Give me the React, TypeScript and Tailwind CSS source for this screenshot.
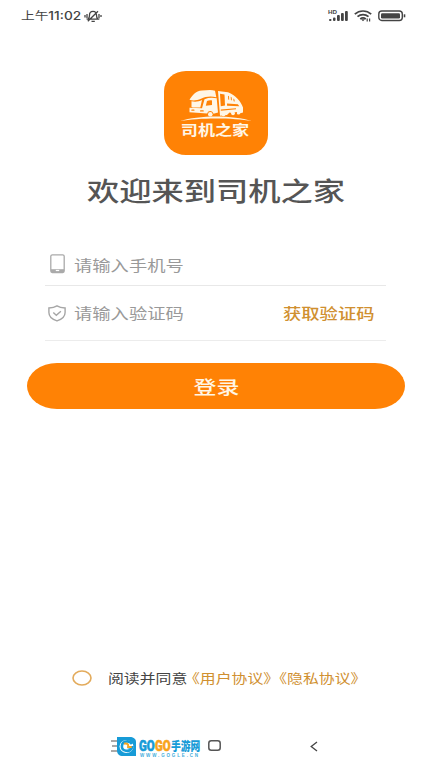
import type { ReactNode } from "react";
import { twMerge } from "tailwind-merge";

// Wide lettering: the glyphs are drawn broader than they are tall
function Wide({ className, children }: { className?: string; children: ReactNode }) {
  return (
    <span className={twMerge("inline-block origin-left scale-x-[1.24] whitespace-nowrap", className)}>
      {children}
    </span>
  );
}

function StatusBar() {
  return (
    <header className="flex h-8 items-center justify-between pl-[21px] pr-[26px] text-[#444]">
      <div className="flex items-center">
        <div className="w-[63px] text-[11.5px] leading-none">
          <Wide className="scale-x-[1.19]">
            上午<span className="font-['Inter'] text-[11.5px] font-medium">11:02</span>
          </Wide>
        </div>
        <svg className="h-[14px] w-[18px]" viewBox="0 0 18 14" fill="none" stroke="currentColor" strokeWidth="1.3">
          <path d="M4 10.200c1.300-1 1.500-2 1.500-4C5.500 3.700 6.800 2.300 9 2.300s3.500 1.400 3.500 3.900c0 2 .3 3 1.500 4ZM7.500 12.300h3.300M3.800 12.300 14 2.300M1 6v2.500M3 5v4.500M15 5v4.500M17 6v2" />
        </svg>
      </div>

      <div className="flex items-center">
        <svg className="h-[14px] w-[22px]" viewBox="0 0 22 14" fill="currentColor">
          <text x="1" y="5" fontSize="6" fontWeight="700" fontFamily="Liberation Sans, sans-serif" textLength="9" lengthAdjust="spacingAndGlyphs">HD</text>
          <rect x="2" y="10" width="2.500" height="2" rx="1" />
          <rect x="6" y="8.500" width="2.500" height="3.500" rx="1" />
          <rect x="10" y="6" width="2.800" height="6" rx="1" />
          <rect x="14" y="4" width="2.800" height="8" rx="1" />
          <rect x="18" y="2" width="2.800" height="10" rx="1" />
        </svg>
        <svg className="ml-[5px] h-[14px] w-[18px]" viewBox="0 0 18 14" fill="none" stroke="currentColor" strokeWidth="1.700">
          <path d="M.8 5.200C5.500.9 12.500.9 17.200 5.200M3.500 7.700c3.200-2.800 7.800-2.800 11 0M6.200 10c1.700-1.300 3.900-1.300 5.600 0" />
          <path d="m7 10.300 2 1.900 2-1.900Z" fill="currentColor" stroke="none" />
          <path d="M13.200 9.500v3M15.600 9.500v3" strokeWidth="1.200" />
        </svg>
        <svg className="ml-[6px] h-[12px] w-[28px]" viewBox="0 0 28 12" fill="none" stroke="currentColor">
          <rect x=".8" y="1" width="23.500" height="9.500" rx="3" strokeWidth="1.400" />
          <rect x="3" y="3.200" width="19" height="5.200" rx="1.200" fill="currentColor" stroke="none" />
          <path d="M26.500 4.300v3" strokeWidth="1.600" />
        </svg>
      </div>
    </header>
  );
}

function AppLogo() {
  return (
    <div className="mt-[39px] flex h-[84px] w-[104px] flex-col items-center self-center rounded-[22px/20px] bg-[#ff8205] pt-[17px] text-[#fff6e6]">
      <svg className="h-[34px] w-[72px] shrink-0" viewBox="0 0 72 34" fill="currentColor">
        {/* wind deflector and cab roof */}
        <path d="M9.500 11.800C12 8 15.500 3 22 2.600c5-.4 9.500-1.200 13 .2l1.300 6.400c-5.800-1.400-10.800-.7-15.300 1.600-4 1.700-8 2.200-11.500 1Z" />
        {/* cab */}
        <path d="M11.500 13.300c4 .9 7.500.2 10.500-1.200l-1.700 7.300H13c-1.500 0-1.700-.5-1.500-1.700Z" />
        <path d="M24.500 11.200c4-1.700 8-1.900 12.200-.9l1.300 14.200-4.500 1.300c-.5-3.500-5.500-4-6.300-.3L9.500 24.200v-4.500l12.500.5Z" />
        <g fill="#ff8205">
          <path d="m27 13-1.200 4.800 6.200-.8v-4.500c-1.700-.3-3.500-.1-5 .5Z" />
          <rect x="11.300" y="21.500" width="3.200" height="1.300" rx=".6" />
          <rect x="20" y="22.300" width="3.800" height="1.300" rx=".6" />
        </g>
        <circle cx="30.300" cy="26.200" r="2.300" />
        {/* trailer */}
        <path d="m38 3 10 1.200C55.500 7 61 13.500 63 19.500v5l-3.500 1-3-1.500-5 1-2-.5-2.500 2.500-7 .8Z" />
        <g fill="#ff8205">
          <path d="M40 5.800 44.500 6.500 45 17.500l-4.200.7Z" />
          <path d="m47 15.500 10.800.8 1.500 2-12.200-.6Z" />
          <path d="m48 7.800 1 .4.200 3.600-1-.2Zm2.700 1 1 .6.200 3-1-.3Zm2.600 1.700 1 .8.500 2.200-1.200-.3Z" />
          <path d="M40.800 21.500 56 20.300v1l-15.200 1.500Z" />
        </g>
        <circle cx="43.500" cy="26.300" r="2" />
        <circle cx="53" cy="25.300" r="1.900" />
        <circle cx="58.500" cy="24.900" r="1.700" />
        {/* road */}
        <path d="M.5 33C18 27 54 27 71.500 33 54 29.500 18 29.500.5 33Z" />
      </svg>
      <Wide className="mr-[3px] block origin-center scale-x-[1.22] text-[14px] font-bold leading-[14px]">
        司机之家
      </Wide>
    </div>
  );
}

function PhoneIcon() {
  return (
    <svg className="ml-[5px] mr-[9px] h-[20px] w-[15px]" viewBox="0 0 15 20" fill="none" stroke="#aaa">
      <rect x=".8" y=".8" width="13.400" height="17.800" rx="1.500" strokeWidth="1.300" />
      <path d="M1 16.700h13" strokeWidth="3" />
      <path d="M5.800 16.500h3.400" stroke="#fff" strokeWidth="1.200" />
    </svg>
  );
}

function ShieldIcon() {
  return (
    <svg className="ml-[3px] mr-[8px] h-[17px] w-[18px]" viewBox="0 0 18 17" fill="none" stroke="#a6a6a6" strokeWidth="1.400">
      <path d="M9 .9C6.800 2.300 4 2.900.9 3v4.500c0 4.200 3 6.800 8.100 8.400 5.100-1.600 8.100-4.200 8.100-8.400V3C14 2.900 11.200 2.300 9 .9Z" />
      <path d="m5.300 7.600 3 2.700 4.600-4.100" />
    </svg>
  );
}

function Watermark() {
  return (
    <div className="flex items-start">
      <svg className="mt-[1px] h-[19px] w-[26px]" viewBox="0 0 26 19">
        <path d="M0 4h8M1 9h6M0 14h8" stroke="#555" strokeWidth="1.200" />
        <path d="M6 0h13c3 0 6 1.800 6 5v14H12c-4 0-6-2-6-6Z" fill="#179bd7" />
        <ellipse cx="15.500" cy="9.500" rx="7" ry="6.500" fill="#fff" />
        <path d="M21 7c-2.300-3.900-9.600-3.500-10.100 1.800-.4 5.600 8 7.200 10.200 1.500h-4.500" fill="none" stroke="#159bd8" strokeWidth="2.600" />
        <path d="M13 6.700c3-.9 4.600.4 4.200 3.200h3.500" fill="none" stroke="#f5a623" strokeWidth="2" />
      </svg>
      <div className="ml-[2px] mt-[1px] flex w-[62px] flex-col">
        <div className="flex h-[16px] items-center whitespace-nowrap font-black leading-[16px]">
          <span className="w-[16px]">
            <Wide className="scale-x-[.76] font-['Roboto'] text-[15px] text-[#179bd7] [-webkit-text-stroke:.6px_#179bd7]">GO</Wide>
          </span>
          <span className="w-[16px]">
            <Wide className="scale-x-[.76] font-['Roboto'] text-[15px] text-[#f8a31b] [-webkit-text-stroke:.6px_#f8a31b]">GO</Wide>
          </span>
          <span className="w-[29px]">
            <Wide className="scale-x-[.78] text-[12.5px] text-[#179bd7]">手游网</Wide>
          </span>
        </div>
        <Wide className="scale-x-100 pl-[1px] font-['Liberation_Sans'] text-[4.5px] font-bold leading-[5px] tracking-[1.85px] text-[#45aedb]">
          WWW.GOGLE.CN
        </Wide>
      </div>
    </div>
  );
}

export default function App() {
  return (
    <main className="flex h-[768px] w-[432px] flex-col overflow-hidden bg-white font-['Noto_Sans_CJK_SC',sans-serif]">
      <StatusBar />
      <AppLogo />

      <h1 className="mt-[17px] flex h-9 items-center pl-[87px] text-[26px] font-medium leading-none text-[#555]">
        <Wide>欢迎来到司机之家</Wide>
      </h1>

      {/* Login form */}
      <section className="ml-[45px] mr-[46px] mt-[35px]">
        <label className="flex h-[43px] items-center border-b border-[#e8e8e8] text-[15px] leading-none text-[#999]">
          <PhoneIcon />
          <Wide className="scale-x-[1.22]">请输入手机号</Wide>
        </label>
        <div className="flex h-[55px] items-center border-b border-[#ececec] text-[15px] leading-none text-[#999]">
          <ShieldIcon />
          <Wide className="mb-[2px] scale-x-[1.22]">请输入验证码</Wide>
          <button className="mb-[2px] ml-auto w-[103px] text-left text-[#d09030]">
            <Wide className="scale-x-[1.22] font-medium">获取验证码</Wide>
          </button>
        </div>
      </section>

      <button className="mx-[27px] mt-[22px] flex h-[46px] shrink-0 items-center justify-center rounded-[30px/23px] bg-[#ff8205] text-[18.500px] font-medium leading-none text-[#fff6e6]">
        <Wide className="ml-[1px] origin-center">登录</Wide>
      </button>

      {/* Terms */}
      <footer className="mt-auto flex h-5 items-center pl-[72px] text-[13px] leading-none text-[#444]">
        <svg className="h-[16px] w-[20px] shrink-0" viewBox="0 0 20 16" fill="none" stroke="#e3ab5c" strokeWidth="1.600">
          <ellipse cx="10" cy="8" rx="9" ry="7" />
        </svg>
        <span className="mb-[2px] ml-[16px] w-[76px] shrink-0">
          <Wide className="scale-x-[1.22]">阅读并同意</Wide>
        </span>
        <Wide className="mb-[2px] scale-x-[1.22] text-[#d09030]">《用户协议》《隐私协议》</Wide>
      </footer>

      {/* System navigation */}
      <nav className="mt-[48px] flex h-8 shrink-0 items-start pl-[111px]">
        <Watermark />
        <svg className="ml-[7px] mt-[4px] h-[11px] w-[13px]" viewBox="0 0 13 11" fill="none" stroke="#555" strokeWidth="1.500">
          <rect x=".8" y=".8" width="11.400" height="9.400" rx="2.500" />
        </svg>
        <svg className="ml-[89px] mt-[5px] h-[11px] w-[8px]" viewBox="0 0 8 11" fill="none" stroke="#444" strokeWidth="1.300">
          <path d="M7 1 1.200 5.500 7 10" />
        </svg>
      </nav>
    </main>
  );
}
